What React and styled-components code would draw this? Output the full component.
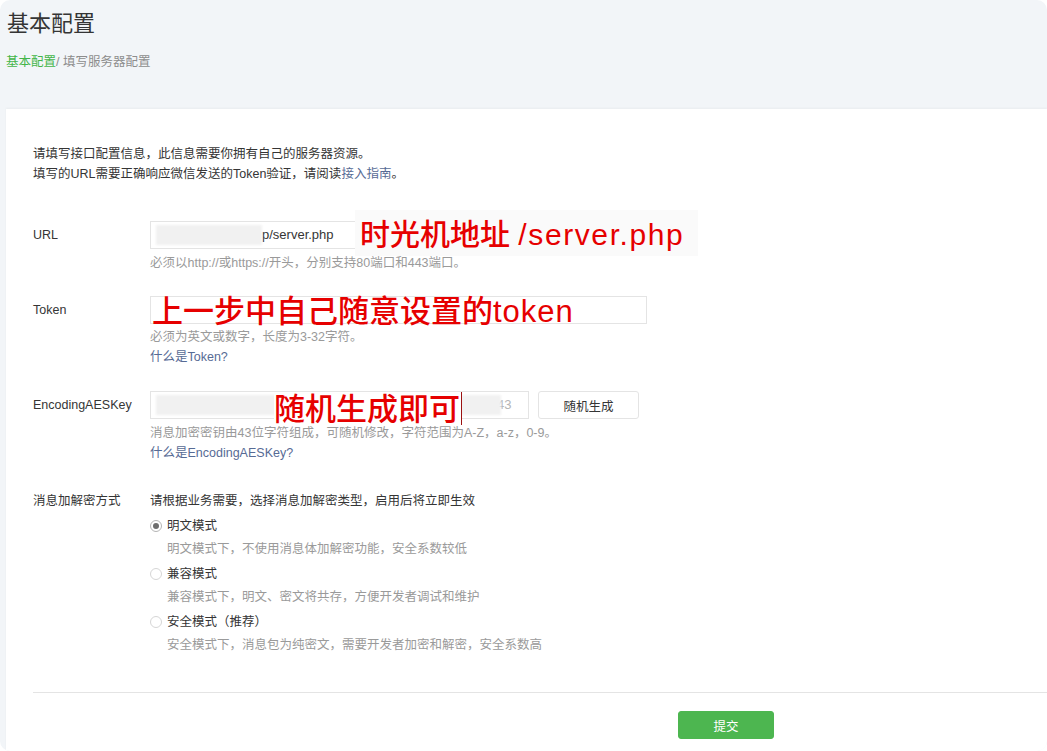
import React from 'react'
import styled, { createGlobalStyle } from 'styled-components'

const GlobalStyle = createGlobalStyle`
  html, body {
    margin: 0;
    padding: 0;
    background: #fff;
  }
  body {
    font-family: "Liberation Sans", "Noto Sans CJK SC", sans-serif;
    color: #353535;
  }
`

const Window = styled.div`
  width: 1047px;
  height: 751px;
  border-radius: 10px;
  background: #f2f5f8;
  overflow: hidden;
  display: flex;
  flex-direction: column;
`

const Header = styled.header`
  padding: 9px 7px 0;
`

const Title = styled.h1`
  margin: 0;
  font-size: 22px;
  line-height: 30px;
  font-weight: 400;
  color: #353535;
`

const Crumbs = styled.div`
  margin-top: 13px;
  font-size: 12.5px;
  line-height: 20px;
  color: #8d8d8d;
  margin-left: -1px;

  a {
    color: #44b549;
    text-decoration: none;
  }
`

const Card = styled.main`
  flex: 1;
  margin: 37px 0 0 6px;
  background: #fff;
  box-shadow: 0 -1px 2px rgba(0, 0, 0, 0.04);
  padding: 35px 0 0 27px;
`

const Intro = styled.p`
  margin: 0;
  font-size: 12.5px;
  line-height: 20px;
`

const Link = styled.a`
  color: #576b95;
  text-decoration: none;
`

const Row = styled.div`
  display: grid;
  grid-template-columns: 117px 1fr;
  margin-top: ${p => p.gap || 24}px;
  font-size: 12.5px;
  line-height: 20px;
`

const Label = styled.div`
  line-height: ${p => (p.tall ? 28 : 20)}px;
`

const Control = styled.div`
  position: relative;
  display: flex;
  flex-direction: column;
`

const InputLine = styled.div`
  display: flex;
  gap: 9px;
`

const Input = styled.div`
  box-sizing: border-box;
  width: ${p => p.w}px;
  height: 28px;
  border: 1px solid #e4e4e4;
  background: #fff;
  display: flex;
  align-items: center;
  padding-left: 5px;
  font-size: 13px;
  overflow: hidden;
`

const Blurred = styled.span`
  display: block;
  width: ${p => p.w}px;
  height: 20px;
  background: #f1f1f1;
  filter: blur(1px);
`

const Faint = styled.span`
  color: #b4b4b4;
  margin-left: ${p => p.offset || 0}px;
`

const Button = styled.button`
  box-sizing: border-box;
  width: ${p => p.w}px;
  height: 28px;
  border-radius: 3px;
  font-family: inherit;
  font-size: 12.5px;
  cursor: pointer;
  border: 1px solid ${p => (p.primary ? '#4db650' : '#e4e4e4')};
  background: ${p => (p.primary ? '#4db650' : '#fff')};
  color: ${p => (p.primary ? '#fff' : '#353535')};
`

const Hint = styled.div`
  margin-top: ${p => p.top || 0}px;
  color: #9a9a9a;
`

const Note = styled.div`
  position: absolute;
  font-size: ${p => p.size || 31}px;
  font-weight: 500;
  line-height: 1;
  color: #e60000;
  white-space: nowrap;
  background: ${p => p.bg || 'transparent'};
`

const Latin = styled.span`
  letter-spacing: ${p => p.spacing}px;
`

const Caret = styled.span`
  display: inline-block;
  width: 1px;
  height: 33px;
  background: #9b1111;
  vertical-align: top;
  margin: -2px 0 0 1px;
`

const Option = styled.label`
  display: flex;
  align-items: center;
  gap: 5px;
  margin-top: 5px;
  line-height: 20px;
`

const Radio = styled.span`
  box-sizing: border-box;
  width: 12px;
  height: 12px;
  border-radius: 50%;
  border: 1px solid ${p => (p.checked ? '#b5b5b5' : '#d6d6d6')};
  display: flex;
  align-items: center;
  justify-content: center;

  &::after {
    content: '';
    width: 6px;
    height: 6px;
    border-radius: 50%;
    background: ${p => (p.checked ? '#6d6d6d' : 'transparent')};
  }
`

const OptionDesc = styled.div`
  margin: 3px 0 0 17px;
  color: #9a9a9a;
`

const Divider = styled.hr`
  margin: 37px 0 0;
  border: 0;
  border-top: 1px solid #e4e4e4;
`

const Footer = styled.div`
  padding: 18px 0 0 645px;
`

const modes = [
  { name: '明文模式', desc: '明文模式下，不使用消息体加解密功能，安全系数较低', checked: true },
  { name: '兼容模式', desc: '兼容模式下，明文、密文将共存，方便开发者调试和维护' },
  { name: '安全模式（推荐）', desc: '安全模式下，消息包为纯密文，需要开发者加密和解密，安全系数高' }
]

export default function App () {
  return (
    <>
      <GlobalStyle />
      <Window>
        <Header>
          <Title>基本配置</Title>
          <Crumbs><a href='#'>基本配置</a>/ 填写服务器配置</Crumbs>
        </Header>
        <Card>
          <Intro>
            请填写接口配置信息，此信息需要你拥有自己的服务器资源。<br />
            填写的URL需要正确响应微信发送的Token验证，请阅读<Link href='#'>接入指南</Link>。
          </Intro>

          <Row gap={37}>
            <Label tall>URL</Label>
            <Control>
              <Input w={497}>
                <Blurred w={106} />
                <span>p/server.php</span>
              </Input>
              <Hint top={4}>必须以http://或https://开头，分别支持80端口和443端口。</Hint>
              <Note size={30} bg='#fafafa' style={{ left: 205, top: -11, padding: '10px 14px 6px 5px' }}>
                时光机地址 <Latin spacing={1.6}>/server.php</Latin>
              </Note>
            </Control>
          </Row>

          <Row gap={23}>
            <Label tall>Token</Label>
            <Control>
              <Input w={497} />
              <Hint top={3}>必须为英文或数字，长度为3-32字符。</Hint>
              <Link href='#'>什么是Token?</Link>
              <Note style={{ left: 2, top: 0 }}>上一步中自己随意设置的<Latin spacing={1}>token</Latin></Note>
            </Control>
          </Row>

          <Row gap={24}>
            <Label tall>EncodingAESKey</Label>
            <Control>
              <InputLine>
                <Input w={379}>
                  <Blurred w={345} />
                  <Faint offset={-4}>43</Faint>
                </Input>
                <Button w={101}>随机生成</Button>
              </InputLine>
              <Hint top={4}>消息加密密钥由43位字符组成，可随机修改，字符范围为A-Z，a-z，0-9。</Hint>
              <Link href='#'>什么是EncodingAESKey?</Link>
              <Note bg='#fff' style={{ left: 124, top: 3 }}>
                随机生成即可<Caret />
              </Note>
            </Control>
          </Row>

          <Row gap={28}>
            <Label>消息加解密方式</Label>
            <Control>
              <div>请根据业务需要，选择消息加解密类型，启用后将立即生效</div>
              {modes.map(m => (
                <div key={m.name}>
                  <Option>
                    <Radio checked={m.checked} />
                    {m.name}
                  </Option>
                  <OptionDesc>{m.desc}</OptionDesc>
                </div>
              ))}
            </Control>
          </Row>

          <Divider />
          <Footer>
            <Button primary w={96}>提交</Button>
          </Footer>
        </Card>
      </Window>
    </>
  )
}
